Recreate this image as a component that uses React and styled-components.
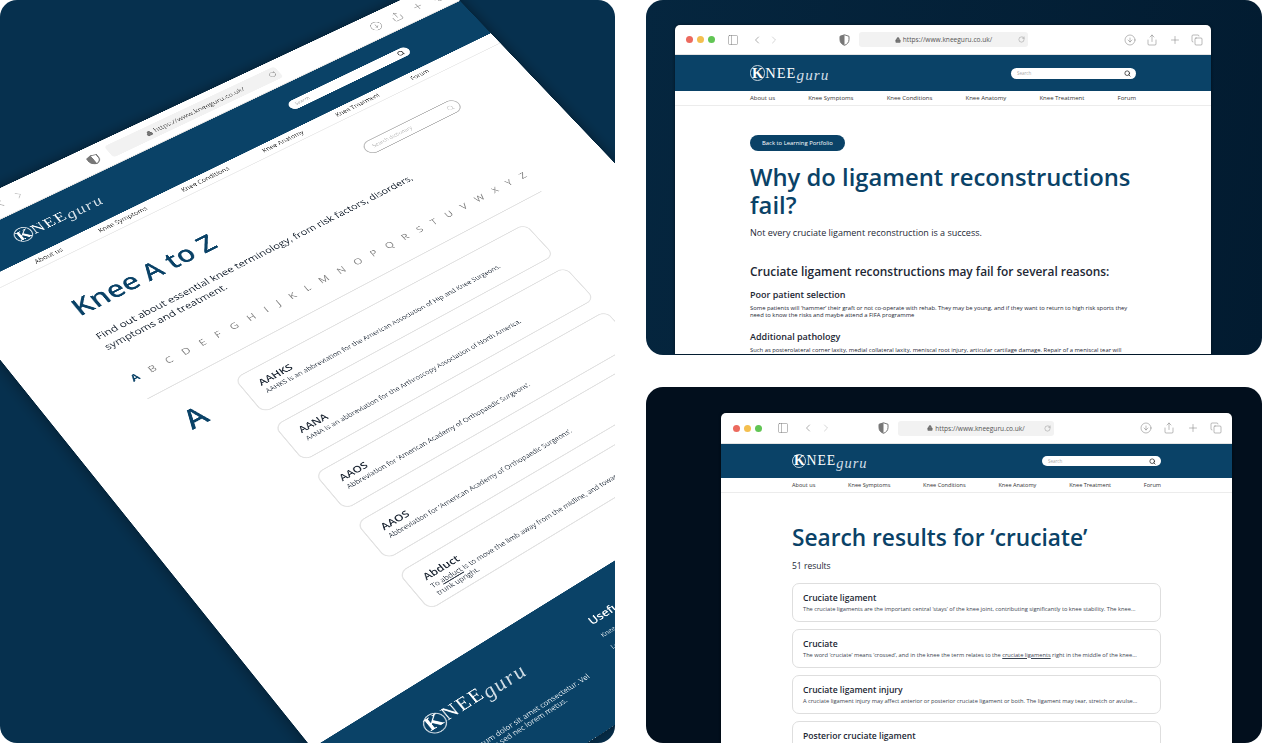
import React from "react";
import styled, { createGlobalStyle } from "styled-components";
import { ArrowDownCircle, ChevronLeft, ChevronRight, Copy, Lock, PanelLeft, Plus, RotateCw, Search, Share } from "lucide-react";

const BLUE = "#0a4267";
const INK = "#1d2734";

// maps a w x h box onto four screen points, clockwise from top left
function quadMatrix(w, h, pts) {
    const [[x0, y0], [x1, y1], [x2, y2], [x3, y3]] = pts;
    const dx1 = x1 - x2, dx2 = x3 - x2, sx = x0 - x1 + x2 - x3;
    const dy1 = y1 - y2, dy2 = y3 - y2, sy = y0 - y1 + y2 - y3;
    const den = dx1 * dy2 - dx2 * dy1;
    const g = (sx * dy2 - dx2 * sy) / den;
    const k = (dx1 * sy - sx * dy1) / den;
    const a = x1 - x0 + g * x1, b = x3 - x0 + k * x3;
    const d = y1 - y0 + g * y1, e = y3 - y0 + k * y3;
    return [a / w, d / w, 0, g / w, b / h, e / h, 0, k / h, 0, 0, 1, 0, x0, y0, 0, 1].join(",");
}

const tiltMatrix = quadMatrix(536, 600, [[-100, 235], [441, -19], [853, 413], [312, 748]]);

const GlobalStyle = createGlobalStyle`
    html, body {
        margin: 0;
        background: #fff;
        font-family: "Open Sans", sans-serif;
    }
`;

const Page = styled.div`
    display: grid;
    grid-template-columns: 615px 616px;
    grid-template-rows: 355px 356px;
    gap: 32px 31px;
    width: 1262px;
    height: 743px;
    overflow: hidden;
`;

const Panel = styled.section`
    overflow: hidden;
    border-radius: 17px;
    background: ${pr => pr.$bg};
    padding: ${pr => pr.$pad};
    box-sizing: border-box;
`;

const LeftPanel = styled(Panel)`
    grid-row: 1 / 3;
`;

const Window = styled.div`
    width: ${pr => pr.$width}px;
    background: #fff;
    border-radius: 5px 5px 0 0;
    box-shadow: 0 0 3px rgba(0, 0, 0, 0.5);
`;

const TiltedWindow = styled(Window)`
    height: 720px;
    display: flex;
    flex-direction: column;
    transform-origin: 0 0;
    transform: matrix3d(${tiltMatrix});
    box-shadow: 0 0 14px rgba(0, 0, 0, 0.45);
`;

const Toolbar = styled.div`
    display: flex;
    align-items: center;
    height: ${pr => pr.$height}px;
    padding: 0 ${pr => pr.$padRight}px 0 ${pr => pr.$padLeft}px;
    color: #777;
    border-bottom: 1px solid #e4e4e4;
    box-sizing: border-box;
`;

const Lights = styled.div`
    display: flex;
    gap: 4px;
`;

const Light = styled.span`
    width: 7px;
    height: 7px;
    border-radius: 50%;
    background: ${pr => pr.$color};
`;

const ToolIcon = styled.span`
    display: flex;
    margin-left: ${pr => pr.$gap || 0}px;
    color: ${pr => pr.$color || "#777"};
`;

const UrlBar = styled.div`
    position: relative;
    display: flex;
    align-items: center;
    justify-content: center;
    gap: 2px;
    width: ${pr => pr.$width}px;
    height: 15px;
    margin-left: 9px;
    border-radius: 3px;
    background: #f2f2f2;
    font-size: 6.6px;
    color: #555;
`;

const Reload = styled.span`
    position: absolute;
    right: 3px;
    display: flex;
`;

const ToolRight = styled.div`
    display: flex;
    align-items: center;
    gap: ${pr => pr.$gap}px;
    margin-left: auto;
`;

const SiteHeader = styled.header`
    display: flex;
    align-items: center;
    justify-content: space-between;
    height: ${pr => pr.$height}px;
    padding: 0 ${pr => pr.$pad}px;
    background: ${BLUE};
`;

const LogoWrap = styled.div`
    display: flex;
    align-items: center;
    color: #fff;
    font-family: "Liberation Serif", serif;
    font-size: ${pr => pr.$size}px;
    letter-spacing: 0.07em;
    line-height: 1;
    white-space: nowrap;
`;

const LogoK = styled.span`
    display: flex;
    align-items: center;
    justify-content: center;
    width: 1.05em;
    height: 1.05em;
    border: 1px solid #c9d6df;
    border-radius: 50%;
    font-weight: 700;
    letter-spacing: 0;
    box-sizing: border-box;
`;

const LogoGuru = styled.span`
    font-style: italic;
    font-weight: 400;
    font-size: 1.05em;
    letter-spacing: 0.07em;
    transform: translateY(0.12em);
    color: #d3dfe7;
`;

const HeaderSearch = styled.div`
    display: flex;
    align-items: center;
    justify-content: space-between;
    width: ${pr => pr.$width}px;
    height: ${pr => pr.$height}px;
    padding: 0 5px 0 6px;
    border-radius: 6px;
    background: #fff;
    color: #aaa;
    font-size: 4.5px;
    box-sizing: border-box;
`;

const Nav = styled.nav`
    display: flex;
    align-items: center;
    justify-content: space-between;
    height: ${pr => pr.$height}px;
    padding: 0 ${pr => pr.$pad}px;
    border-bottom: 1px solid #ececec;
    font-size: ${pr => pr.$size}px;
    color: #333;
    box-sizing: border-box;
`;

const Content = styled.main`
    padding: ${pr => pr.$pad};
    color: ${INK};
`;

const BackButton = styled.span`
    display: flex;
    align-items: center;
    width: fit-content;
    height: 16px;
    padding: 0 12px;
    border-radius: 8px;
    background: ${BLUE};
    color: #fff;
    font-size: 5.9px;
`;

const BlueTitle = styled.h1`
    margin: ${pr => pr.$margin};
    color: ${BLUE};
    font-size: ${pr => pr.$size}px;
    font-weight: 600;
    line-height: ${pr => pr.$line}px;
`;

const Lead = styled.p`
    margin: ${pr => pr.$margin};
    font-size: ${pr => pr.$size}px;
    line-height: ${pr => pr.$line}px;
`;

const ArticleHeading = styled.h2`
    margin: 23px 0 0;
    font-size: 11.9px;
    font-weight: 600;
    line-height: 18px;
    white-space: nowrap;
`;

const ArticleSub = styled.h3`
    margin: ${pr => pr.$top}px 0 0;
    font-size: 9px;
    font-weight: 600;
    line-height: 13px;
`;

const ArticleText = styled.p`
    margin: 4px 0 0;
    font-size: 5.85px;
    line-height: 7px;
`;

const ResultCard = styled.article`
    height: 39px;
    margin-bottom: 7px;
    padding: 7.5px 10px 0;
    border: 1px solid #dedede;
    border-radius: 7px;
    box-sizing: border-box;
`;

const ResultTitle = styled.div`
    font-size: 8.6px;
    font-weight: 600;
    line-height: 13px;
`;

const ResultText = styled.div`
    font-size: 5.7px;
    line-height: 8px;
    white-space: nowrap;
    color: #3b4450;
`;

const Underlined = styled.span`
    text-decoration: underline;
`;

const TiltMain = styled.main`
    flex: 1;
    padding: 31px 73px 0;
    color: ${INK};
`;

const TitleRow = styled.div`
    display: flex;
    align-items: flex-start;
    justify-content: space-between;
`;

const DictSearch = styled.div`
    display: flex;
    align-items: center;
    justify-content: space-between;
    width: 99px;
    height: 16px;
    padding: 0 5px 0 7px;
    border: 1px solid #bbb;
    border-radius: 8px;
    color: #bbb;
    font-size: 5px;
    box-sizing: border-box;
`;

const Alphabet = styled.div`
    display: flex;
    justify-content: space-between;
    margin-top: 26px;
    padding-bottom: 17px;
    border-bottom: 1px solid #e2e2e2;
    color: #888;
    font-size: 9.5px;
    line-height: 13px;
`;

const ActiveLetter = styled.span`
    color: ${BLUE};
    font-weight: 700;
`;

const Dictionary = styled.div`
    display: grid;
    grid-template-columns: 66px 1fr;
    margin: 21px 33px 0 0;
`;

const BigLetter = styled.div`
    padding-left: 12px;
    color: ${BLUE};
    font-size: 26px;
    font-weight: 600;
    line-height: 1.2;
`;

const TermCard = styled.article`
    height: 43px;
    margin-bottom: 15px;
    padding: 8px 13px 0;
    border: 1px solid #e2e2e2;
    border-radius: 8px;
    box-sizing: border-box;
`;

const TermTitle = styled.div`
    font-size: 9.4px;
    font-weight: 600;
    line-height: 13px;
`;

const TermText = styled.div`
    font-size: 6.1px;
    line-height: 7.5px;
    color: #3b4450;
`;

const Footer = styled.footer`
    display: flex;
    height: 120px;
    padding: 27px 0 0 76px;
    background: ${BLUE};
    color: #dfe8ee;
    box-sizing: border-box;
`;

const FooterBrand = styled.div`
    width: 157px;
    padding-top: 1px;
`;

const FooterBlurb = styled.p`
    margin: 23px 0 0;
    font-size: 6.2px;
    line-height: 7.5px;
    white-space: nowrap;
`;

const FooterHead = styled.div`
    font-size: 10px;
    font-weight: 600;
    color: #fff;
`;

const FooterLink = styled.div`
    margin-top: 5px;
    font-size: 5.5px;
`;

const Shield = () => (
    <svg width="11" height="12" viewBox="0 0 11 12">
        <path d="M5.5 .8 10 2.3v3.4c0 2.7-1.9 4.7-4.5 5.6C2.9 10.4 1 8.4 1 5.7V2.3z" fill="none" stroke="#777" strokeWidth="1" />
        <path d="M5.5 .8 1 2.3v3.4c0 2.7 1.9 4.7 4.5 5.6z" fill="#777" />
    </svg>
);

const Logo = ({ size }) => (
    <LogoWrap $size={size}>
        <LogoK>K</LogoK>
        NEE
        <LogoGuru>guru</LogoGuru>
    </LogoWrap>
);

const NAV_ITEMS = ["About us", "Knee Symptoms", "Knee Conditions", "Knee Anatomy", "Knee Treatment", "Forum"];

const ALPHABET = "BCDEFGHIJKLMNOPQRSTUVWXYZ".split("");

const TERMS = [
    { title: "AAHKS", text: "AAHKS is an abbreviation for the American Association of Hip and Knee Surgeons." },
    { title: "AANA", text: "AANA is an abbreviation for the Arthroscopy Association of North America." },
    { title: "AAOS", text: "Abbreviation for ‘American Academy of Orthopaedic Surgeons’." },
    { title: "AAOS", text: "Abbreviation for ‘American Academy of Orthopaedic Surgeons’." },
];

function Chrome({ bar, pad, searchWidth, searchHeight, logoSize, headerHeight, navSize }) {
    return (
        <>
            <Toolbar $height={bar.height} $padLeft={bar.padLeft} $padRight={bar.padRight}>
                <Lights>
                    <Light $color="#ec6a5e" />
                    <Light $color="#f4bf4f" />
                    <Light $color="#61c554" />
                </Lights>
                <ToolIcon $gap={bar.sideGap}><PanelLeft size={12} strokeWidth={1} /></ToolIcon>
                <ToolIcon $gap={bar.backGap}><ChevronLeft size={12} strokeWidth={1.2} /></ToolIcon>
                <ToolIcon $gap={bar.nextGap} $color="#bbb"><ChevronRight size={12} strokeWidth={1.2} /></ToolIcon>
                <ToolIcon $gap={bar.shieldGap}><Shield /></ToolIcon>
                <UrlBar $width={bar.urlWidth}>
                    <Lock size={6} fill="#777" strokeWidth={1.5} />
                    https://www.kneeguru.co.uk/
                    <Reload><RotateCw size={7} strokeWidth={1} /></Reload>
                </UrlBar>
                <ToolRight $gap={bar.iconGap}>
                    <ArrowDownCircle size={12} strokeWidth={1} />
                    <Share size={12} strokeWidth={1} />
                    <Plus size={12} strokeWidth={1} />
                    <Copy size={12} strokeWidth={1} />
                </ToolRight>
            </Toolbar>
            <SiteHeader $height={headerHeight} $pad={pad}>
                <Logo size={logoSize} />
                <HeaderSearch $width={searchWidth} $height={searchHeight}>
                    Search
                    <Search size={7} color="#222" strokeWidth={2.5} />
                </HeaderSearch>
            </SiteHeader>
            <Nav $height={15} $pad={pad} $size={navSize}>
                {NAV_ITEMS.map(item => <span key={item}>{item}</span>)}
            </Nav>
        </>
    );
}

const ARTICLE_BAR = { height: 30, padLeft: 11, padRight: 8, sideGap: 12, backGap: 12, nextGap: 5, shieldGap: 59, urlWidth: 169, iconGap: 10.5 };
const SEARCH_BAR = { height: 31, padLeft: 12, padRight: 10, sideGap: 15, backGap: 13, nextGap: 6, shieldGap: 46, urlWidth: 156, iconGap: 11.5 };

export default function App() {
    return (
        <Page>
            <GlobalStyle />
            <LeftPanel $bg="#06304e" $pad="0">
                <TiltedWindow $width={536}>
                    <Chrome bar={ARTICLE_BAR} pad={73} searchWidth={125} searchHeight={11} logoSize={14.5} headerHeight={48} navSize={6} />
                    <TiltMain>
                        <TitleRow>
                            <BlueTitle $size={24} $line={27} $margin="7px 0 0">Knee A to Z</BlueTitle>
                            <DictSearch>
                                Search dictionary
                                <Search size={7} strokeWidth={1.5} />
                            </DictSearch>
                        </TitleRow>
                        <Lead $size={9.3} $line={13} $margin="15px 68px 0 0">
                            Find out about essential knee terminology, from risk factors, disorders, symptoms and treatment.
                        </Lead>
                        <Alphabet>
                            <ActiveLetter>A</ActiveLetter>
                            {ALPHABET.map(letter => <span key={letter}>{letter}</span>)}
                        </Alphabet>
                        <Dictionary>
                            <BigLetter>A</BigLetter>
                            <div>
                                {TERMS.map((term, i) => (
                                    <TermCard key={i}>
                                        <TermTitle>{term.title}</TermTitle>
                                        <TermText>{term.text}</TermText>
                                    </TermCard>
                                ))}
                                <TermCard>
                                    <TermTitle>Abduct</TermTitle>
                                    <TermText>
                                        To <Underlined>abduct</Underlined> is to move the limb away from the midline, and towards the side, with the<br />
                                        trunk upright.
                                    </TermText>
                                </TermCard>
                            </div>
                        </Dictionary>
                    </TiltMain>
                    <Footer>
                        <FooterBrand>
                            <Logo size={16.7} />
                            <FooterBlurb>
                                Lorem ipsum dolor sit amet consectetur. Vel<br />
                                tellus mauris sed nec lorem metus.
                            </FooterBlurb>
                        </FooterBrand>
                        <div>
                            <FooterHead>Useful links</FooterHead>
                            <FooterLink>Knee Symptoms</FooterLink>
                            <FooterLink>Legal</FooterLink>
                        </div>
                    </Footer>
                </TiltedWindow>
            </LeftPanel>

            <Panel $bg="linear-gradient(100deg, #05263f, #021b30)" $pad="25px 51px 0 29px">
                <Window $width={536}>
                    <Chrome bar={ARTICLE_BAR} pad={75} searchWidth={125} searchHeight={11} logoSize={14.5} headerHeight={36} navSize={6} />
                    <Content $pad="29px 75px 0">
                        <BackButton>Back to Learning Portfolio</BackButton>
                        <BlueTitle $size={23.8} $line={28} $margin="12px 0 0">Why do ligament reconstructions fail?</BlueTitle>
                        <Lead $size={9} $line={12} $margin="8px 0 0">Not every cruciate ligament reconstruction is a success.</Lead>
                        <ArticleHeading>Cruciate ligament reconstructions may fail for several reasons:</ArticleHeading>
                        <ArticleSub $top={8}>Poor patient selection</ArticleSub>
                        <ArticleText>
                            Some patients will ‘hammer’ their graft or not co-operate with rehab. They may be young, and if they want to return to high risk sports they need to know the risks and maybe attend a FIFA programme
                        </ArticleText>
                        <ArticleSub $top={10.5}>Additional pathology</ArticleSub>
                        <ArticleText>
                            Such as posterolateral corner laxity, medial collateral laxity, meniscal root injury, articular cartilage damage. Repair of a meniscal tear will
                        </ArticleText>
                    </Content>
                </Window>
            </Panel>

            <Panel $bg="#020f1d" $pad="26px 30px 0 75px">
                <Window $width={511}>
                    <Chrome bar={SEARCH_BAR} pad={71} searchWidth={119} searchHeight={10} logoSize={13.8} headerHeight={34} navSize={5.6} />
                    <Content $pad="32px 71px 0">
                        <BlueTitle $size={22.7} $line={25.6} $margin="0">Search results for ‘cruciate’</BlueTitle>
                        <Lead $size={8.5} $line={11.5} $margin="9px 0 12px">51 results</Lead>
                        <ResultCard>
                            <ResultTitle>Cruciate ligament</ResultTitle>
                            <ResultText>The cruciate ligaments are the important central ‘stays’ of the knee joint, contributing significantly to knee stability. The knee...</ResultText>
                        </ResultCard>
                        <ResultCard>
                            <ResultTitle>Cruciate</ResultTitle>
                            <ResultText>The word ‘cruciate’ means ‘crossed’, and in the knee the term relates to the <Underlined>cruciate ligaments</Underlined> right in the middle of the knee...</ResultText>
                        </ResultCard>
                        <ResultCard>
                            <ResultTitle>Cruciate ligament injury</ResultTitle>
                            <ResultText>A cruciate ligament injury may affect anterior or posterior cruciate ligament or both. The ligament may tear, stretch or avulse...</ResultText>
                        </ResultCard>
                        <ResultCard>
                            <ResultTitle>Posterior cruciate ligament</ResultTitle>
                        </ResultCard>
                    </Content>
                </Window>
            </Panel>
        </Page>
    );
}
